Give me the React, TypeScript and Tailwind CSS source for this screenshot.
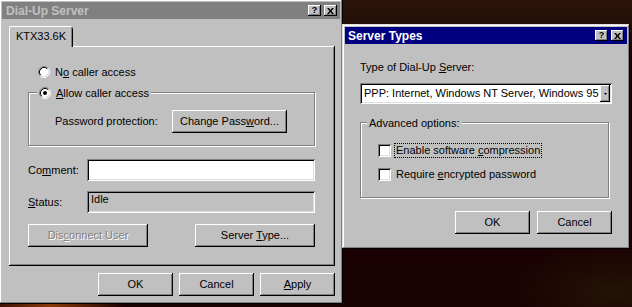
import type { ReactNode } from "react";

const raised =
  "bg-[#c0c0c0] shadow-[inset_-1px_-1px_#000,inset_1px_1px_#fff,inset_-2px_-2px_#808080]";
const windowFrame =
  "bg-[#c0c0c0] shadow-[inset_-1px_-1px_#000,inset_1px_1px_#dfdfdf,inset_-2px_-2px_#808080,inset_2px_2px_#fff]";
const sunken =
  "shadow-[inset_1px_1px_#808080,inset_-1px_-1px_#fff,inset_2px_2px_#000,inset_-2px_-2px_#dfdfdf]";
const etched = "border border-[#808080] shadow-[inset_1px_1px_#fff,1px_1px_#fff]";

function Key({ children }: { children: ReactNode }) {
  return <span className="underline underline-offset-[1px]">{children}</span>;
}

function Radio({ checked }: { checked?: boolean }) {
  return (
    <svg width="12" height="12" viewBox="0 0 12 12" className="shrink-0">
      <circle cx="6" cy="6" r="4.5" fill="#fff" />
      <path d="M2.11 9.89A5.5 5.5 0 0 1 9.89 2.11" fill="none" stroke="#808080" />
      <path d="M9.89 2.11A5.5 5.5 0 0 1 2.11 9.89" fill="none" stroke="#fff" />
      <path d="M2.82 9.18A4.5 4.5 0 0 1 9.18 2.82" fill="none" stroke="#000" />
      <path d="M9.18 2.82A4.5 4.5 0 0 1 2.82 9.18" fill="none" stroke="#dfdfdf" />
      {checked && <circle cx="6" cy="6" r="2" fill="#000" />}
    </svg>
  );
}

function Checkbox() {
  return <span className={`h-[13px] w-[13px] shrink-0 bg-white ${sunken}`} />;
}

function Button({
  children,
  className = "",
  disabled,
}: {
  children: ReactNode;
  className?: string;
  disabled?: boolean;
}) {
  return (
    <div
      className={`flex h-[23px] items-center justify-center ${raised} ${
        disabled ? "text-[#808080] [text-shadow:1px_1px_#fff]" : "text-black"
      } ${className}`}
    >
      {children}
    </div>
  );
}

function CaptionButtons() {
  return (
    <div className="flex gap-[3px]">
      <div className={`flex h-[11px] w-[13px] items-center justify-center ${raised}`}>
        <span className="text-[9px] font-bold leading-none text-black">?</span>
      </div>
      <div className={`flex h-[11px] w-[13px] items-center justify-center ${raised}`}>
        <svg width="7" height="6" viewBox="0 0 7 6">
          <path d="M0 0h2l1.5 2L5 0h2L4.5 3 7 6H5L3.5 4 2 6H0l2.5-3z" fill="#000" />
        </svg>
      </div>
    </div>
  );
}

function DialUpServer() {
  return (
    <div className={`absolute left-[-1px] top-[-1px] flex h-[305px] w-[344px] flex-col p-[3px] ${windowFrame}`}>
      <div className="flex h-[17px] items-center justify-between bg-[#808080] pl-[4px] pr-[3px]">
        <span className="text-[12px] font-bold text-[#c0c0c0]">Dial-Up Server</span>
        <CaptionButtons />
      </div>

      <div className="ml-[7px] mr-[5px] mt-[7px] flex flex-col">
        <div className="relative z-10 -mb-[1px] flex h-[21px] w-[64px] items-center justify-center rounded-t-[2px] bg-[#c0c0c0] pb-[1px] shadow-[inset_1px_0_#fff,inset_0_1px_#fff,inset_-1px_0_#000,inset_-2px_0_#808080]">
          KTX33.6K
        </div>
        <div className={`flex h-[220px] flex-col pl-[19px] pr-[20px] pt-[18px] ${raised}`}>
          <div className="flex h-[16px] items-center gap-[5px] pl-[10px]">
            <Radio />
            <span>
              N<Key>o</Key> caller access
            </span>
          </div>

          <div className={`relative mt-[12px] h-[54px] ${etched} pl-[26px] pt-[17px]`}>
            <div className="absolute left-[8px] top-[-8px] flex h-[16px] items-center gap-[5px] bg-[#c0c0c0] px-[2px]">
              <Radio checked />
              <span>
                <Key>A</Key>llow caller access
              </span>
            </div>
            <div className="flex items-center">
              <span className="w-[117px]">Password protection:</span>
              <Button className="w-[115px]">
                <span>
                  Change Pass<Key>w</Key>ord...
                </span>
              </Button>
            </div>
          </div>

          <div className="mt-[13px] flex items-center">
            <span className="w-[59px]">
              Co<Key>m</Key>ment:
            </span>
            <div className={`h-[22px] w-[228px] bg-white ${sunken}`} />
          </div>

          <div className="mt-[10px] flex items-center">
            <span className="w-[59px]">
              <Key>S</Key>tatus:
            </span>
            <div className={`flex h-[22px] w-[228px] items-start pl-[4px] pt-[3px] ${sunken}`}>Idle</div>
          </div>

          <div className="mt-[11px] flex justify-between">
            <Button className="w-[120px]" disabled>
              <span>
                Dis<Key>c</Key>onnect User
              </span>
            </Button>
            <Button className="w-[120px]">
              <span>
                Server <Key>T</Key>ype...
              </span>
            </Button>
          </div>
        </div>
      </div>

      <div className="mr-[5px] mt-[7px] flex justify-end gap-[6px]">
        <Button className="w-[75px]">OK</Button>
        <Button className="w-[75px]">Cancel</Button>
        <Button className="w-[75px]">
          <span>
            <Key>A</Key>pply
          </span>
        </Button>
      </div>
    </div>
  );
}

function ServerTypes() {
  return (
    <div className={`absolute left-[342px] top-[24px] flex h-[225px] w-[288px] flex-col p-[3px] ${windowFrame}`}>
      <div className="flex h-[17px] items-center justify-between bg-[#000080] pl-[3px] pr-[3px]">
        <span className="text-[12px] font-bold text-white">Server Types</span>
        <CaptionButtons />
      </div>

      <div className="flex flex-col pl-[15px] pr-[15px]">
        <div className="mt-[16px] flex h-[14px] items-center">
          <span>
            Type of Dial-Up <Key>S</Key>erver:
          </span>
        </div>

        <div className={`mt-[9px] flex h-[21px] w-[252px] items-stretch bg-white p-[2px] ${sunken}`}>
          <span className="flex flex-1 items-center overflow-hidden whitespace-nowrap pl-[2px]">
            PPP: Internet, Windows NT Server, Windows 95
          </span>
          <div className={`flex w-[10px] items-center justify-center ${raised}`}>
            <svg width="3" height="2" viewBox="0 0 3 2">
              <path d="M0 0h3L1.5 2z" fill="#000" />
            </svg>
          </div>
        </div>

        <div className={`relative mt-[18px] flex h-[76px] w-[249px] flex-col gap-[8px] ${etched} pl-[17px] pt-[19px]`}>
          <div className="absolute left-[6px] top-[-8px] flex h-[16px] items-center bg-[#c0c0c0] px-[2px]">
            Advanced options:
          </div>
          <div className="flex h-[16px] items-center gap-[3px]">
            <Checkbox />
            <span className="border border-dotted border-black px-[1px] leading-[13px]">
              Enable software <Key>c</Key>ompression
            </span>
          </div>
          <div className="flex h-[16px] items-center gap-[4px]">
            <Checkbox />
            <span className="pl-[1px]">
              Require <Key>e</Key>ncrypted password
            </span>
          </div>
        </div>

        <div className="mt-[13px] flex justify-end gap-[7px]">
          <Button className="w-[75px]">OK</Button>
          <Button className="w-[75px]">Cancel</Button>
        </div>
      </div>
    </div>
  );
}

export default function App() {
  return (
    <div className="relative h-[307px] w-[632px] overflow-hidden bg-[#1a0103] bg-[radial-gradient(ellipse_at_8%_100%,#8a3a0a_0,transparent_9%),radial-gradient(ellipse_at_97%_95%,#241304_0,transparent_12%),linear-gradient(180deg,#2c1409_0%,#231007_7%,#1c0205_18%,#1a0103_100%)] font-['Liberation_Sans',Arial,sans-serif] text-[11px] leading-none text-black">
      <DialUpServer />
      <ServerTypes />
    </div>
  );
}
